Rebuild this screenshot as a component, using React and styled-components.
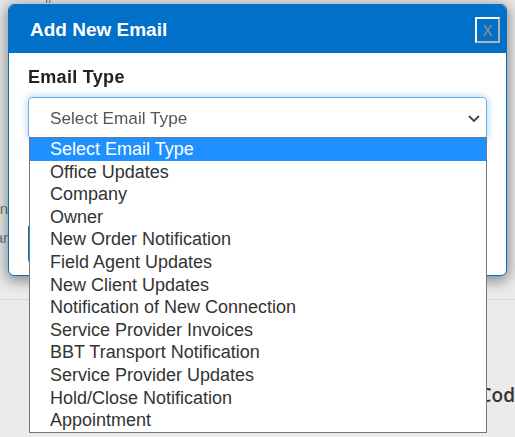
import React from 'react';
import styled, { createGlobalStyle } from 'styled-components';

const GlobalStyle = createGlobalStyle`
  html, body {
    margin: 0;
    padding: 0;
    width: 100%;
    height: 100%;
    overflow: hidden;
    background: #ebebeb;
    font-family: "Liberation Sans", Arial, sans-serif;
  }
`;

const emailTypes = [
    'Select Email Type',
    'Office Updates',
    'Company',
    'Owner',
    'New Order Notification',
    'Field Agent Updates',
    'New Client Updates',
    'Notification of New Connection',
    'Service Provider Invoices',
    'BBT Transport Notification',
    'Service Provider Updates',
    'Hold/Close Notification',
    'Appointment',
];

// page behind the modal, only fragments of it show
const Page = styled.div`
  width: 515px;
  height: 437px;
  display: grid;
  grid-template-rows: 200px 70px 30px 80px 30px 27px;
  color: #777;
  font-size: 15px;
`;

const PageTop = styled.div`
  padding-left: 45px;
  margin-top: -10px;
  color: #444;
  font-size: 14px;
`;

const SideText = styled.div`
  display: flex;
  flex-direction: column;
  gap: 12px;
  width: 8px;
  overflow: hidden;
  direction: rtl;
  white-space: nowrap;
`;

const PageRule = styled.div`
  border-bottom: 1px solid #d9d9d9;
`;

const PageHeading = styled.div`
  display: flex;
  justify-content: flex-end;
  align-items: center;
  overflow: hidden;
  font-family: "Open Sans", sans-serif;
  font-weight: 600;
  font-size: 19px;
  color: #333;
  white-space: nowrap;
`;

const Modal = styled.div`
  position: fixed;
  top: 4px;
  left: 8px;
  width: 497px;
  height: 270px;
  background: #fff;
  border: 1px solid #0070c9;
  border-radius: 6px;
  box-shadow: 0 3px 14px 2px rgba(0, 0, 0, 0.42);
`;

const Header = styled.div`
  height: 48px;
  background: #0070c9;
  border-radius: 5px 5px 0 0;
  display: flex;
  align-items: center;
  justify-content: space-between;
  padding: 0 6px 0 21px;
`;

const Title = styled.h4`
  margin: 2px 0 0 0;
  color: #fff;
  font-size: 19px;
  font-weight: bold;
  line-height: 22px;
`;

const CloseButton = styled.button`
  width: 25px;
  height: 26px;
  margin-top: 1px;
  padding: 0 0 1px 0;
  background: transparent;
  border: 2px solid;
  border-color: #fff #b3b3b3 #b3b3b3 #fff;
  color: #8a8a8a;
  font-family: "Liberation Sans", Arial, sans-serif;
  font-size: 20px;
  line-height: 20px;
  display: flex;
  align-items: center;
  justify-content: center;
`;

const Body = styled.div`
  position: relative;
  padding: 14px 19px 0 19px;
  display: flex;
  flex-direction: column;
`;

const Label = styled.label`
  font-size: 18px;
  font-weight: bold;
  color: #222;
  line-height: 21px;
  margin-bottom: 9px;
  letter-spacing: 0.3px;
`;

const SelectBox = styled.div`
  height: 39px;
  border: 1px solid #66afe9;
  border-radius: 4px;
  box-shadow: 0 0 8px rgba(102, 175, 233, 0.6);
  display: flex;
  align-items: center;
  justify-content: space-between;
  padding: 1px 6px 0 21px;
  font-size: 17.2px;
  color: #555;
`;

const SaveButton = styled.button`
  align-self: flex-start;
  margin-top: 85px;
  width: 90px;
  height: 39px;
  border: none;
  border-radius: 4px;
  background: #0070c9;
  color: #fff;
  font-size: 16px;
`;

const Dropdown = styled.ul`
  position: absolute;
  top: 84px;
  left: 20px;
  width: 456px;
  margin: 0;
  padding: 0;
  list-style: none;
  background: #fff;
  border: 1px solid #767676;
`;

const Option = styled.li`
  height: 22.6px;
  line-height: 22px;
  padding-left: 20px;
  font-size: 18px;
  white-space: nowrap;
  color: ${(p) => (p.$active ? '#fff' : '#333')};
  background: ${(p) => (p.$active ? '#1e90ff' : '#fff')};
`;

const Chevron = () => (
    <svg width="12" height="7" viewBox="0 0 12 7" fill="none">
        <path d="M1 1l5 5 5-5" stroke="#444" strokeWidth="1.8" />
    </svg>
);

export default function App() {
    return (
        <>
            <GlobalStyle />
            <Page>
                <PageTop>#</PageTop>
                <SideText>
                    <span>Domain</span>
                    <span>Similar</span>
                </SideText>
                <PageRule />
                <div />
                <PageHeading>Cod</PageHeading>
                <div />
            </Page>
            <Modal>
                <Header>
                    <Title>Add New Email</Title>
                    <CloseButton>x</CloseButton>
                </Header>
                <Body>
                    <Label>Email Type</Label>
                    <SelectBox>
                        <span>Select Email Type</span>
                        <Chevron />
                    </SelectBox>
                    <SaveButton>Save</SaveButton>
                    <Dropdown>
                        {emailTypes.map((type, i) => (
                            <Option key={type} $active={i === 0}>
                                {type}
                            </Option>
                        ))}
                    </Dropdown>
                </Body>
            </Modal>
        </>
    );
}
